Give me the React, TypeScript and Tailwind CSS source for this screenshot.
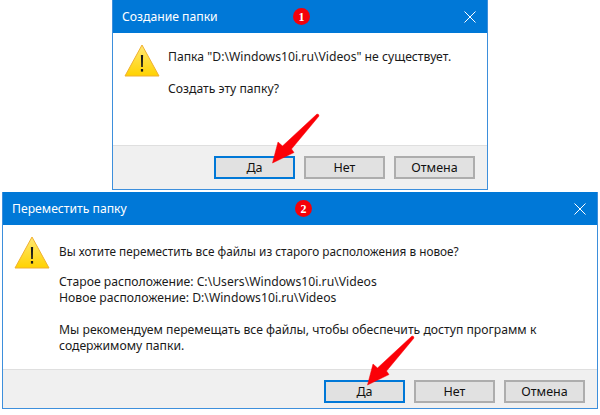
function WarningIcon() {
  return (
    <svg width="36" height="33" viewBox="0 0 36 33" className="shrink-0">
      <defs>
        <linearGradient id="warn" x1="0" y1="0" x2="0" y2="1">
          <stop offset="0" stopColor="#ffe873" />
          <stop offset="1" stopColor="#ffd200" />
        </linearGradient>
      </defs>
      <path d="M18 1 L35 32 L1 32 Z" fill="url(#warn)" stroke="#f0b030" strokeWidth="1" strokeLinejoin="round" />
      <path d="M16.9 11 h2.2 l-0.3 12 h-1.6 Z" fill="#1a1a1a" />
      <rect x="16.9" y="25" width="2.2" height="2.6" fill="#1a1a1a" />
    </svg>
  );
}

function CloseIcon() {
  return (
    <svg width="12" height="12" viewBox="0 0 12 12" fill="none" stroke="#ffffff" strokeWidth="1">
      <path d="M0.5 0.5 L11.5 11.5 M11.5 0.5 L0.5 11.5" />
    </svg>
  );
}

function Arrow() {
  return (
    <svg width="48" height="52" viewBox="0 0 48 52">
      <path
        d="M45 1 Q47 1 47 3 L19.5 36 L22 39.5 L0.5 50 L6 29 L10.5 33 Z"
        fill="#fb0007"
        stroke="#fb0007"
        strokeWidth="0.5"
        strokeLinejoin="round"
      />
    </svg>
  );
}

function Badge({ n, className }: { n: number; className: string }) {
  return (
    <div
      className={`absolute flex h-[17px] w-[17px] items-center justify-center rounded-full bg-[#f40009] font-['Liberation_Serif',serif] text-[12px] leading-none font-bold text-white ${className}`}
    >
      {n}
    </div>
  );
}

function DialogButton({ label, active }: { label: string; active?: boolean }) {
  return (
    <div
      className={`flex h-[23px] w-[81px] items-center justify-center bg-[#e1e1e1] text-[12.5px] text-[#111] ${
        active ? "border-2 border-[#0078d7]" : "border-2 border-[#adadad]"
      }`}
    >
      {label}
    </div>
  );
}

function DialogFooter() {
  return (
    <div className="flex flex-1 items-start justify-end gap-[9px] border-t border-[#dfdfdf] bg-[#f0f0f0] pt-[10px] pr-[12px]">
      <DialogButton label="Да" active />
      <DialogButton label="Нет" />
      <DialogButton label="Отмена" />
    </div>
  );
}

function TitleBar({ title, titleClass }: { title: string; titleClass: string }) {
  return (
    <div className={`flex h-[33px] shrink-0 items-center justify-between bg-[#0078d7] pr-[11px] text-[12.2px] text-white ${titleClass}`}>
      <span>{title}</span>
      <CloseIcon />
    </div>
  );
}

export default function App() {
  return (
    <div className="relative h-[415px] w-[600px] overflow-hidden bg-white font-['Noto_Sans',sans-serif] leading-[16px] text-[#1a1a1a]">
      <div className="flex flex-col">
        {/* first dialog */}
        <div className="ml-[112px] flex h-[190px] w-[376px] flex-col border-x border-b border-[#3d8fdc]">
          <TitleBar title="Создание папки" titleClass="pl-[9px]" />
          <div className="flex h-[112px] gap-[8px] pt-[11px] pl-[11px] text-[12.2px]">
            <WarningIcon />
            <div className="pt-[5px]">
              <p>Папка "D:\Windows10i.ru\Videos" не существует.</p>
              <p className="mt-[16px]">Создать эту папку?</p>
            </div>
          </div>
          <DialogFooter />
        </div>

        {/* second dialog */}
        <div className="mt-[2px] ml-[2px] flex h-[217px] w-[596px] flex-col border-x border-b border-[#3d8fdc]">
          <TitleBar title="Переместить папку" titleClass="pl-[9px]" />
          <div className="flex h-[144px] gap-[9px] pt-[11px] pl-[11px] text-[12.2px]">
            <WarningIcon />
            <div className="pt-[7px]">
              <p className="text-[11.8px]">Вы хотите переместить все файлы из старого расположения в новое?</p>
              <p className="mt-[15px]">Старое расположение: C:\Users\Windows10i.ru\Videos</p>
              <p>Новое расположение: D:\Windows10i.ru\Videos</p>
              <p className="mt-[16px] w-[510px]">
                Мы рекомендуем перемещать все файлы, чтобы обеспечить доступ программ к содержимому папки.
              </p>
            </div>
          </div>
          <DialogFooter />
        </div>
      </div>

      <Badge n={1} className="top-[8px] left-[293px]" />
      <Badge n={2} className="top-[200px] left-[295px]" />
      <div className="absolute top-[113px] left-[272px]">
        <Arrow />
      </div>
      <div className="absolute top-[335px] left-[367px]">
        <Arrow />
      </div>
    </div>
  );
}
